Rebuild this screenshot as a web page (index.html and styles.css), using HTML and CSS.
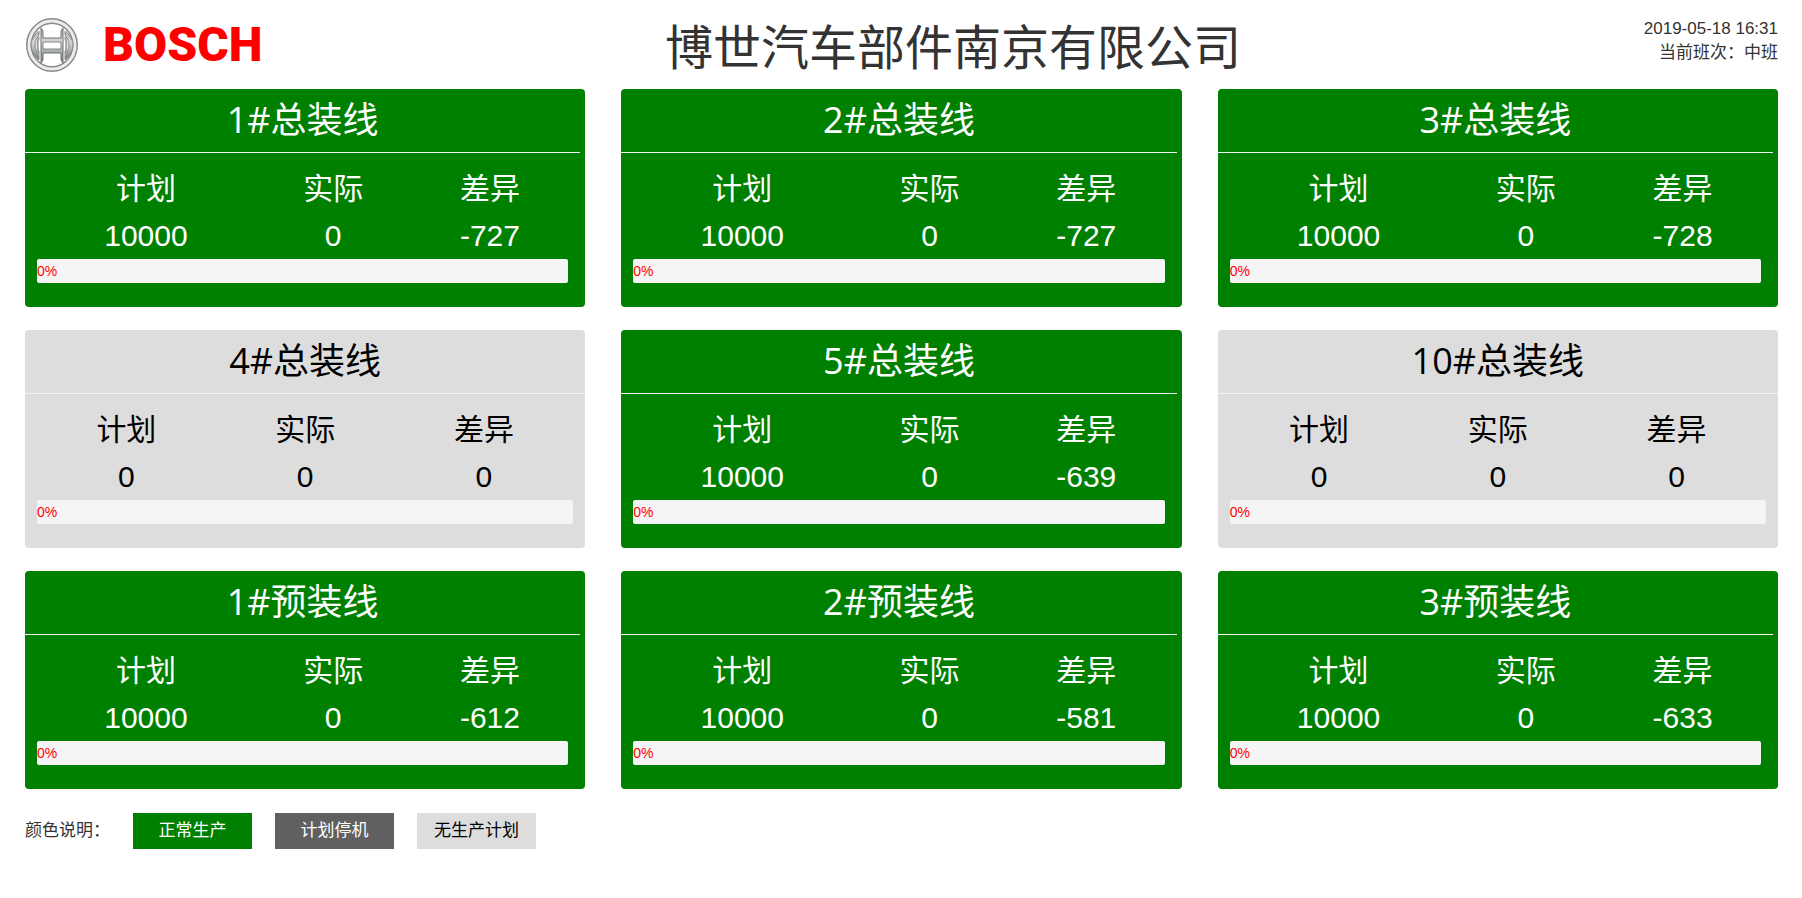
FILE: index.html
```html
<!DOCTYPE html>
<html lang="zh-CN">
<head>
<meta charset="UTF-8">
<title>博世汽车部件南京有限公司</title>
<link rel="stylesheet" href="styles.css">
</head>
<body>
<header class="top">
  <div class="logo">
    <svg class="logo-mark" viewBox="0 0 54 56" aria-hidden="true">
      <defs>
        <linearGradient id="metal" x1="0" y1="0" x2="0" y2="1">
          <stop offset="0" stop-color="#b4b5b1"/>
          <stop offset="0.4" stop-color="#d6d8d8"/>
          <stop offset="1" stop-color="#74787a"/>
        </linearGradient>
      </defs>
      <ellipse cx="27" cy="28" rx="23" ry="24" fill="none" stroke="#8a8a87" stroke-width="6"/>
      <ellipse cx="27" cy="28" rx="23" ry="24" fill="none" stroke="#ececea" stroke-width="3"/>
      <path d="M14 14C8 19 6 24 6 28S8 38 14 43V38C11 34 10 31 10 28S11 22 14 18Z" fill="url(#metal)" stroke="#85898a"/>
      <path d="M40 14C46 19 48 24 48 28S46 38 40 43V38C43 34 44 31 44 28S43 22 40 18Z" fill="url(#metal)" stroke="#85898a"/>
      <path d="M16 11L18 14V21H36V14L38 11V46L36 43V36H18V43L16 46Z" fill="url(#metal)" stroke="#6f7375"/>
      <path d="M14 20Q11 28 14 37M40 20Q43 28 40 37" fill="none" stroke="#9a9d9d" stroke-width="2"/>
      <path d="M18 25H36V32H18Z" fill="#fff" stroke="#85898a"/>
    </svg>
    <span class="logo-text">BOSCH</span>
  </div>
  <h1>博世汽车部件南京有限公司</h1>
  <div class="info">
    <div id="time">2019-05-18 16:31</div>
    <div>当前班次：中班</div>
  </div>
</header>

<main id="lines" class="lines"></main>

<footer class="legend">
  <span>颜色说明：</span>
  <span class="tag run">正常生产</span>
  <span class="tag stop">计划停机</span>
  <span class="tag idle">无生产计划</span>
</footer>

<script src="board.js"></script>
</body>
</html>
```
FILE: styles.css
```css
* { box-sizing: border-box; }
body {
  margin: 0;
  padding: 17px 24px 24px 25px;
  background: #fff;
  color: #333;
  font-family: "Liberation Sans", "Noto Sans CJK SC", sans-serif;
  font-size: 17px;
}
.top {
  display: flex;
  height: 72px;
}
.logo {
  display: flex;
  gap: 24px;
  height: 56px;
  align-items: center;
}
.logo-mark { width: 54px; height: 56px; }
.logo-text {
  font-family: Roboto, sans-serif;
  font-weight: 900;
  font-size: 48px;
  line-height: 56px;
  color: #f00;
}
h1 {
  flex: 1;
  margin: 0;
  font-size: 48px;
  font-weight: 400;
  line-height: 64px;
  text-align: center;
}
.info {
  text-align: right;
  line-height: 24px;
}
.lines {
  display: grid;
  grid-template-columns: repeat(3, 1fr);
  gap: 23px 36px;
}
.card {
  height: 218px;
  border-radius: 4px;
}
.run { background: #008000; color: #fff; }
.stop { background: #606060; color: #fff; }
.idle { background: #ddd; color: #000; }
.card.run { padding-right: 5px; }
.card h2 {
  margin: 0;
  height: 64px;
  border-bottom: 1px solid #f2f2f2;
  font-family: "Open Sans", "Noto Sans CJK SC", sans-serif;
  font-size: 36px;
  font-weight: 400;
  line-height: 62px;
  text-align: center;
}
.body { padding: 12px 12px 0; }
table {
  width: 100%;
  table-layout: fixed;
  border-collapse: collapse;
}
th, td {
  height: 47px;
  padding: 0;
  font-size: 30px;
  font-weight: 400;
  line-height: 47px;
  text-align: center;
}
.run th:first-child { width: 41%; }
.bar {
  height: 24px;
  border-radius: 2px;
  background: #f5f5f5;
  color: #f00;
  font-size: 14px;
  line-height: 24px;
}
.legend {
  display: flex;
  margin-top: 24px;
  gap: 23px;
  line-height: 36px;
}
.tag {
  width: 119px;
  text-align: center;
}
```
FILE: board.js
```js
const lines = [
  { name: '1#总装线', plan: 10000, actual: 0, diff: -727 },
  { name: '2#总装线', plan: 10000, actual: 0, diff: -727 },
  { name: '3#总装线', plan: 10000, actual: 0, diff: -728 },
  { name: '4#总装线', plan: 0, actual: 0, diff: 0 },
  { name: '5#总装线', plan: 10000, actual: 0, diff: -639 },
  { name: '10#总装线', plan: 0, actual: 0, diff: 0 },
  { name: '1#预装线', plan: 10000, actual: 0, diff: -612 },
  { name: '2#预装线', plan: 10000, actual: 0, diff: -581 },
  { name: '3#预装线', plan: 10000, actual: 0, diff: -633 }
];

function card(line) {
  const percent = line.plan ? Math.round(line.actual / line.plan * 100) : 0;
  return `
    <section class="card ${line.plan ? 'run' : 'idle'}">
      <h2>${line.name}</h2>
      <div class="body">
        <table>
          <tr><th>计划</th><th>实际</th><th>差异</th></tr>
          <tr><td>${line.plan}</td><td>${line.actual}</td><td>${line.diff}</td></tr>
        </table>
        <div class="bar">${percent}%</div>
      </div>
    </section>`;
}

document.getElementById('lines').innerHTML = lines.map(card).join('');
```
